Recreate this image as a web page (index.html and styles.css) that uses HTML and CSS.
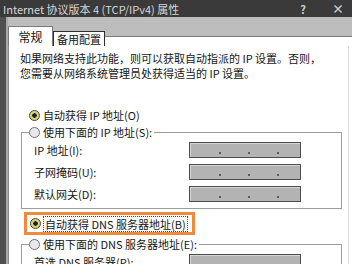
FILE: index.html
```html
<!DOCTYPE html>
<html lang="zh-CN">
<head>
    <meta charset="UTF-8">
    <title>Internet 协议版本 4 (TCP/IPv4) 属性</title>
    <link rel="stylesheet" href="styles.css">
</head>
<body>
    <div class="window">
        <div class="titlebar">
            <span class="title">Internet 协议版本 4 (TCP/IPv4) 属性</span>
            <span class="ctl help">?</span>
            <span class="ctl close">×</span>
        </div>

        <div class="frame">
            <div class="tabs">
                <div class="tab active">常规</div>
                <div class="tab">备用配置</div>
            </div>

            <div class="panel">
                <p class="intro">如果网络支持此功能，则可以获取自动指派的 IP 设置。否则，<br>您需要从网络系统管理员处获得适当的 IP 设置。</p>

                <div class="option first"><span class="radio on"></span>自动获得 IP 地址(O)</div>

                <fieldset class="group">
                    <legend class="option"><span class="radio"></span>使用下面的 IP 地址(S):</legend>
                    <div class="field">
                        <span class="label">IP 地址(I):</span>
                        <div class="ip"><i></i><i></i><i></i></div>
                    </div>
                    <div class="field">
                        <span class="label">子网掩码(U):</span>
                        <div class="ip"><i></i><i></i><i></i></div>
                    </div>
                    <div class="field">
                        <span class="label">默认网关(D):</span>
                        <div class="ip"><i></i><i></i><i></i></div>
                    </div>
                </fieldset>

                <div class="option mark"><span class="radio on"></span><span class="focus">自动获得 DNS 服务器地址(B)</span></div>

                <fieldset class="group dns">
                    <legend class="option"><span class="radio"></span>使用下面的 DNS 服务器地址(E):</legend>
                    <div class="field">
                        <span class="label">首选 DNS 服务器(P):</span>
                        <div class="ip"><i></i><i></i><i></i></div>
                    </div>
                </fieldset>
            </div>
        </div>
    </div>
</body>
</html>
```

FILE: styles.css
```css
body {
    margin: 0;
    width: 352px;
    height: 264px;
    overflow: hidden;
    background-color: #bdbdbd;
    font-family: "Noto Sans CJK SC", "Liberation Sans", sans-serif;
    font-size: 11px;
    color: #151515;
}
.window {
    display: flex;
    flex-direction: column;
    height: 264px;
}
.titlebar {
    display: flex;
    align-items: center;
    height: 18px;
    padding-left: 3px;
    background-color: #3a3a3a;
    color: #d6d6d6;
    white-space: nowrap;
}
.title {
    flex: 1;
}
.ctl {
    font-weight: bold;
    color: #cfcfcf;
}
.close {
    margin-left: 26px;
    margin-right: 8px;
    font-size: 12px;
}
.frame {
    flex: 1;
    display: flex;
    flex-direction: column;
    border-left: 6px solid #4f4f4f;
    padding-left: 2px;
    background-color: #fff;
    box-shadow: inset 2px 0 #a9a9a9;
}
.tabs {
    display: flex;
    align-items: flex-end;
    height: 29px;
    background: linear-gradient(#bdbdbd 19px, #7c7c7c 19px, #7c7c7c 20px, #fff 20px);
}
.tab {
    box-sizing: border-box;
    display: flex;
    align-items: center;
    justify-content: center;
    width: 52px;
    height: 15px;
    background-color: #fff;
    border: 1px solid #2e2e2e;
    border-bottom: none;
}
.tab.active {
    width: 45px;
    height: 20px;
    border-color: #7a7a7a;
    font-size: 12px;
}
.panel {
    flex: 1;
    background-color: #fff;
    border-left: 1px solid #8a8a8a;
    border-right: 1px solid #dcdcdc;
    margin-right: 3px;
}
.intro {
    margin: 5px 0 0 11px;
    line-height: 15px;
    white-space: nowrap;
}
.option {
    display: flex;
    align-items: center;
    gap: 3px;
    height: 14px;
    line-height: 14px;
    white-space: nowrap;
}
.option.first {
    margin: 27px 0 0 20px;
}
.radio {
    box-sizing: border-box;
    width: 11px;
    height: 11px;
    border-radius: 50%;
    border: 1px solid #737373;
    background-color: #e9e9e9;
}
.radio.on {
    border-color: #4a4a2a;
    background: radial-gradient(circle, #222 0 2px, #d9d27a 2.5px);
}
.group {
    margin: 3px 6px 0 12px;
    padding: 0 8px 3px 7px;
    border: 1px solid #9c9c9c;
    min-width: 0;
}
.group legend {
    padding: 0 2px 0 0;
}
.field {
    display: grid;
    grid-template-columns: 160px 112px;
    align-items: center;
    height: 22px;
}
.label {
    padding-left: 5px;
    white-space: nowrap;
}
.ip {
    box-sizing: border-box;
    display: flex;
    align-items: flex-end;
    gap: 27px;
    height: 16px;
    padding: 0 0 3px 29px;
    background-color: #b3b3b3;
    border: 1px solid #4c4c4c;
    box-shadow: inset 1px 1px #d6d6d6;
}
.ip i {
    width: 2px;
    height: 2px;
    background-color: #5a5a5a;
}
.mark {
    box-sizing: border-box;
    width: 171px;
    height: 23px;
    margin: 3px 0 0 15px;
    padding-left: 3px;
    border: 3px solid #ec8a3d;
}
.focus {
    outline: 1px dotted #444;
    padding: 0 1px;
}
.group.dns {
    margin-top: 2px;
}
```
